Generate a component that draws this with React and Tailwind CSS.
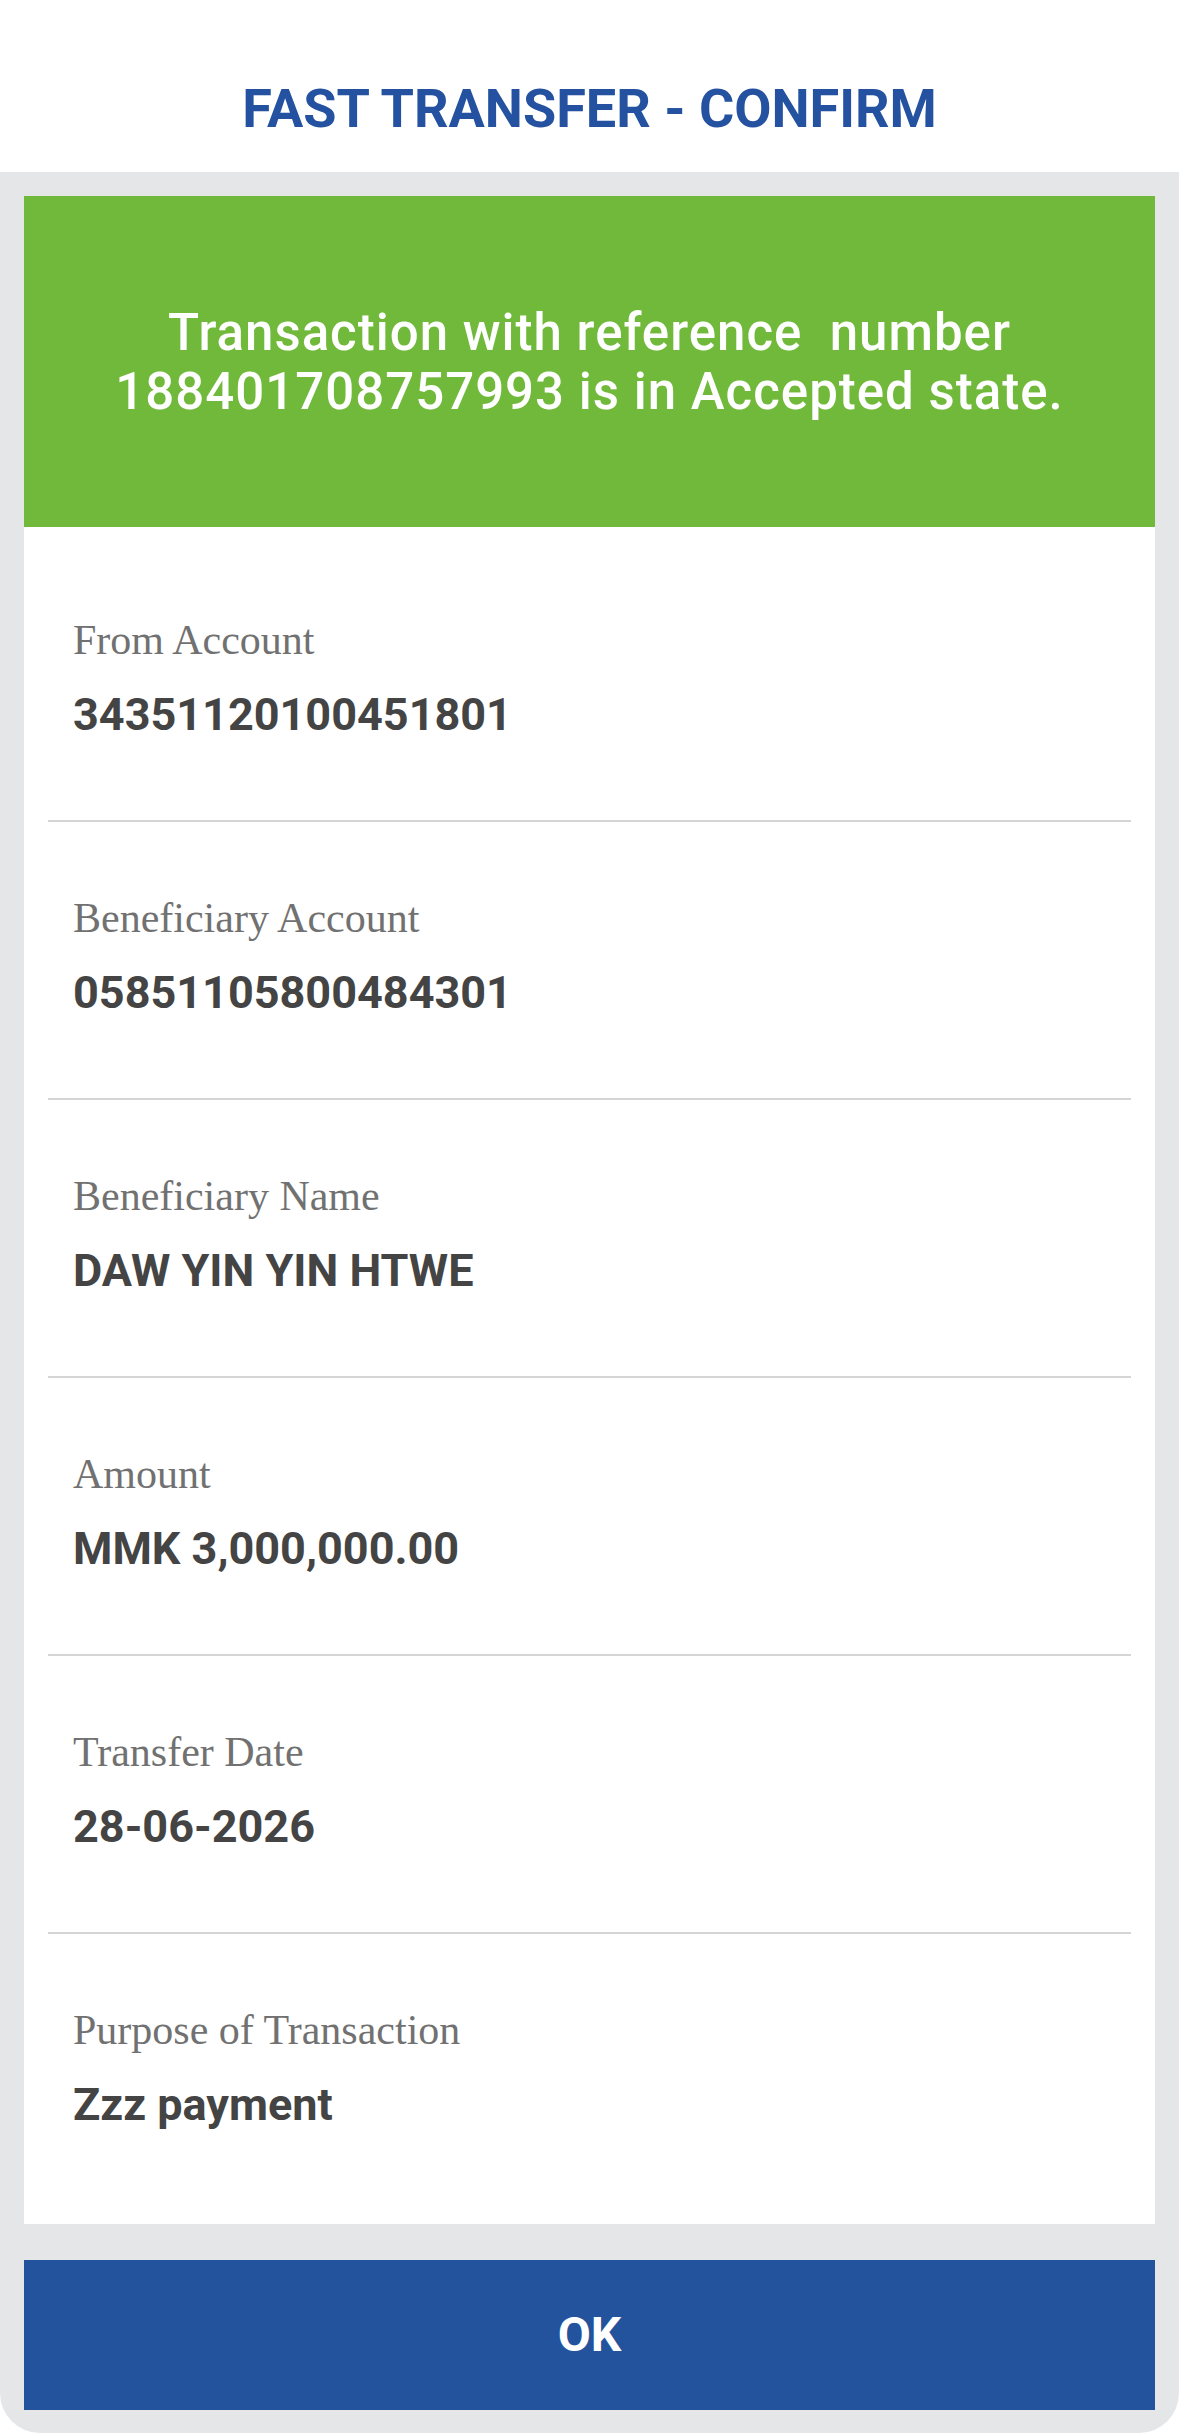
import React from 'react';

const rows = [
  { label: 'From Account', value: '34351120100451801' },
  { label: 'Beneficiary Account', value: '05851105800484301' },
  { label: 'Beneficiary Name', value: 'DAW YIN YIN HTWE' },
  { label: 'Amount', value: 'MMK 3,000,000.00' },
  { label: 'Transfer Date', value: '28-06-2026' },
  { label: 'Purpose of Transaction', value: 'Zzz payment' },
];

function DetailRow({ label, value, last }) {
  return (
    <div className={`mx-6 pt-[72px] pb-[79px] ${last ? '' : 'border-b-2 border-[#d5d5d5]'}`}>
      <div className="pl-[25px] text-[42px] leading-[48px] text-[#717171] font-['Liberation_Serif',serif]">
        {label}
      </div>
      <div className="pl-[25px] mt-[25px] text-[45px] leading-[52px] font-bold text-[#444444] font-['Roboto',sans-serif]">
        {value}
      </div>
    </div>
  );
}

export default function App() {
  return (
    <div className="w-[1179px] min-h-[2435px] bg-white font-['Roboto',sans-serif]">
      <header className="h-[172px] pt-[78px] text-center">
        <h1 className="text-[54px] leading-[61px] font-bold text-[#2452a0]">FAST TRANSFER - CONFIRM</h1>
      </header>

      <main className="bg-[#e5e6e8] px-6 pt-6 pb-[23px] rounded-b-[40px]">
        <div className="h-[331px] bg-[#70b93a] flex items-center justify-center">
          <p className="text-center text-white text-[51px] leading-[59px] tracking-[1px] font-medium whitespace-pre">
            {'Transaction with reference  number'}
            <br />
            {'188401708757993 is in Accepted state.'}
          </p>
        </div>

        <div className="bg-white pt-[17px] pb-[14px]">
          {rows.map((r, i) => (
            <DetailRow key={r.label} label={r.label} value={r.value} last={i === rows.length - 1} />
          ))}
        </div>

        <button className="mt-9 w-full h-[150px] bg-[#23539d] text-white text-[48px] font-bold flex items-center justify-center">
          OK
        </button>
      </main>
    </div>
  );
}
